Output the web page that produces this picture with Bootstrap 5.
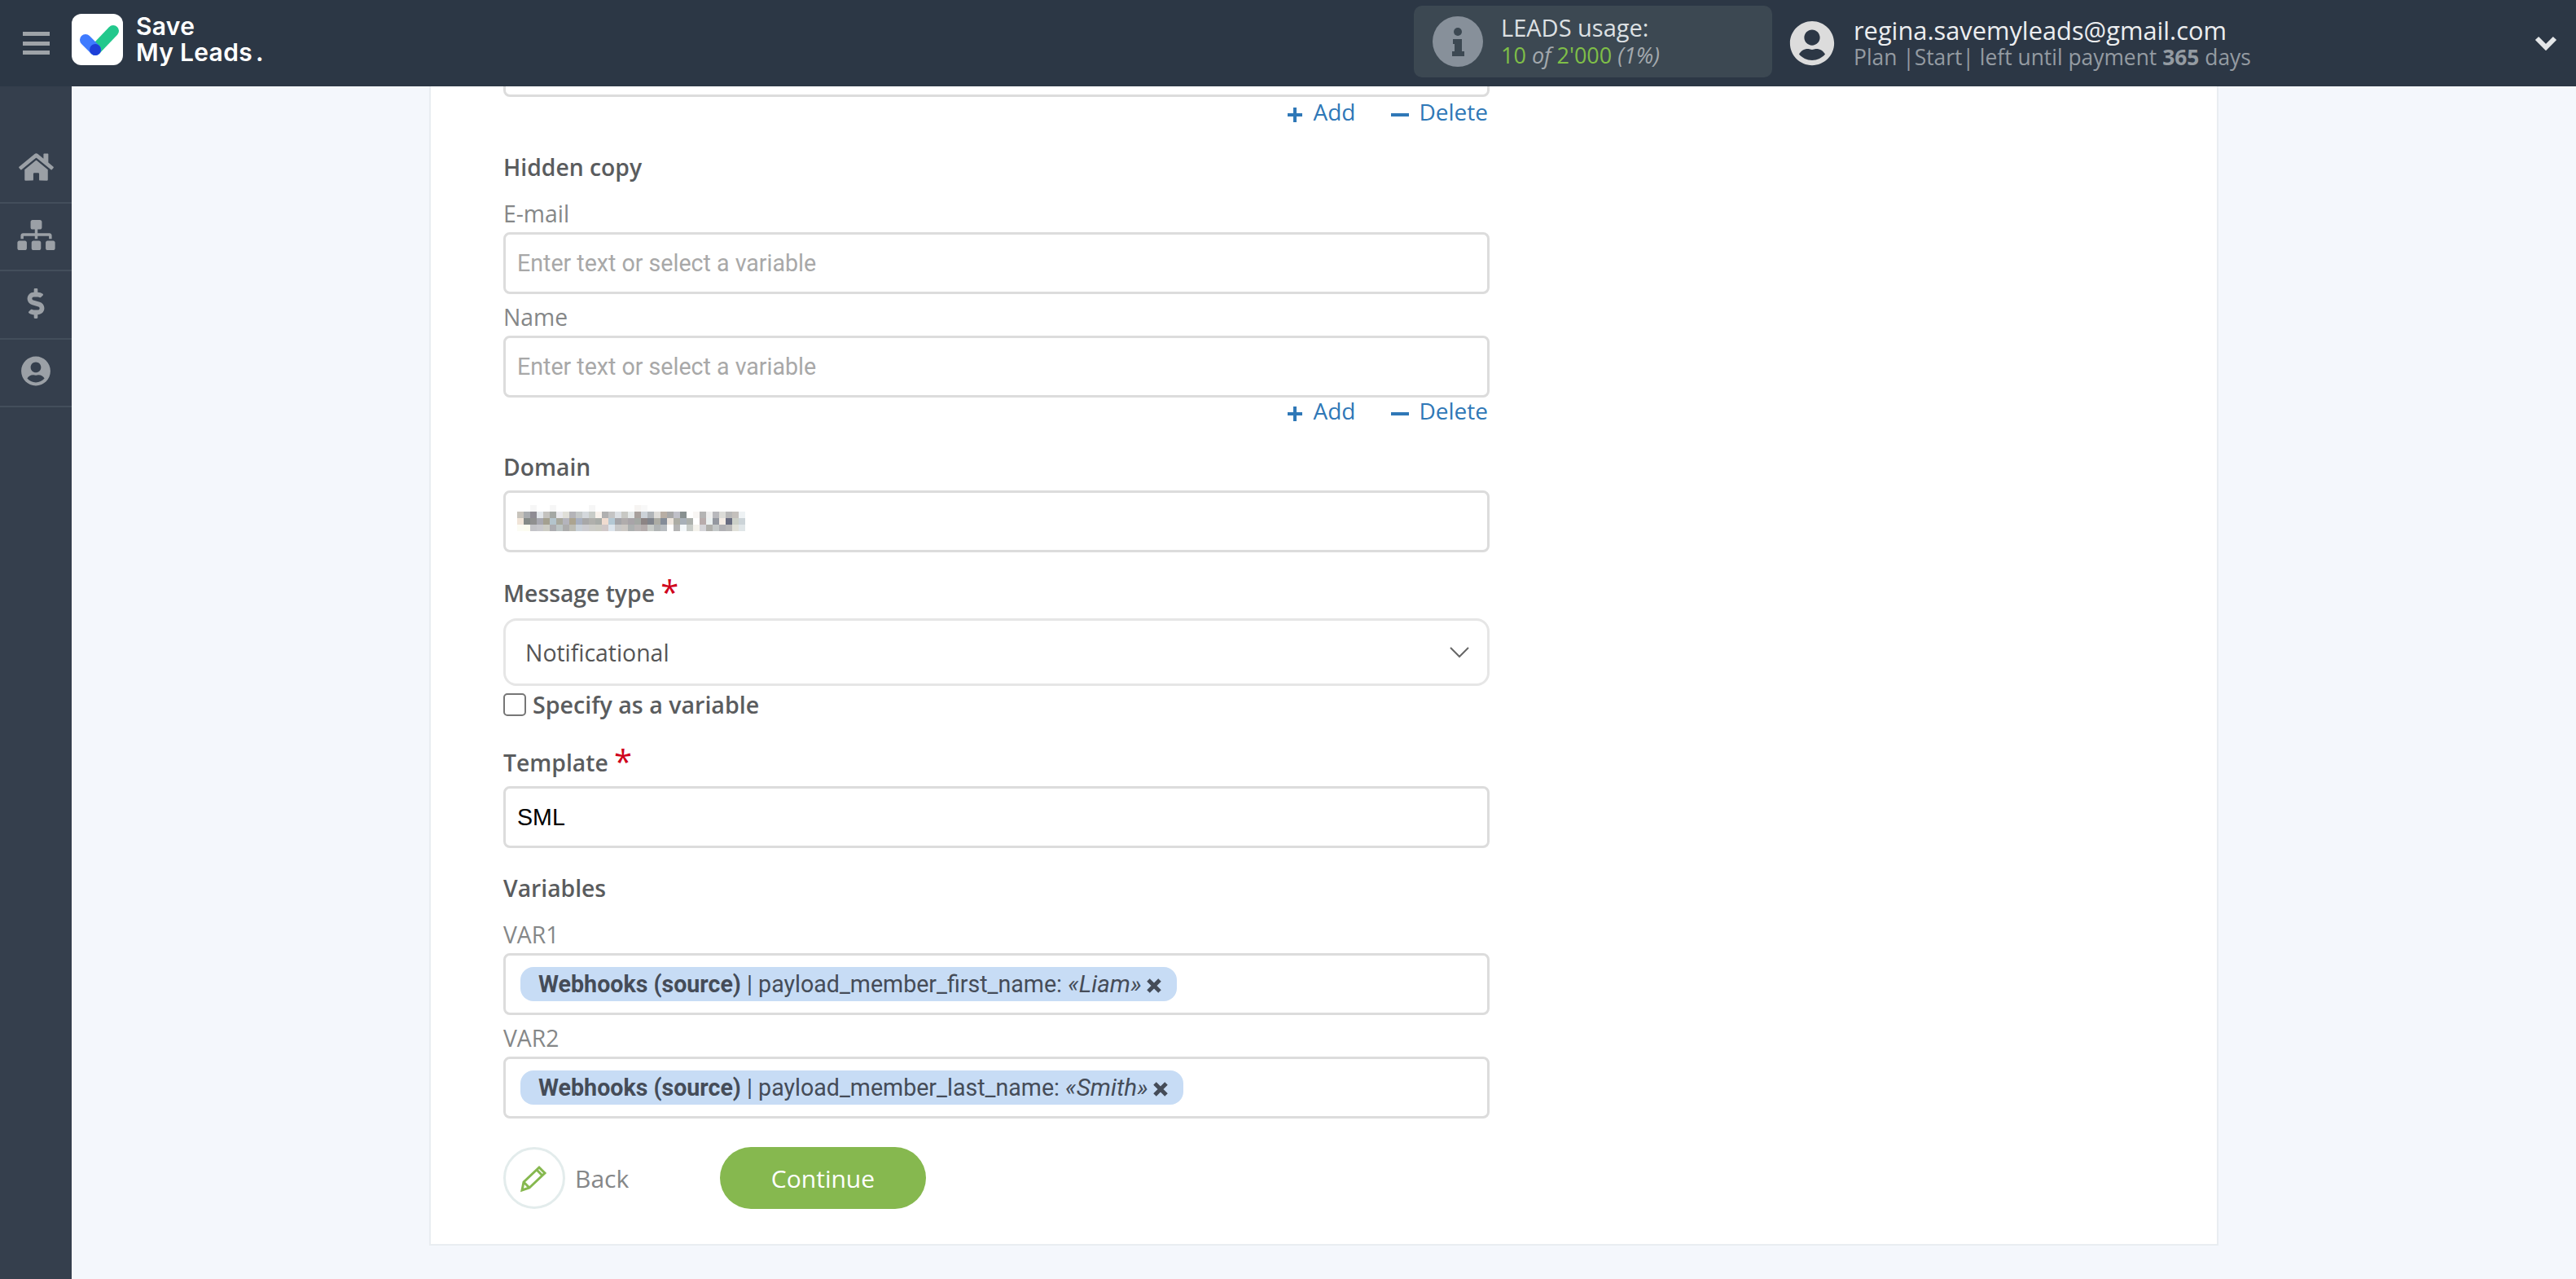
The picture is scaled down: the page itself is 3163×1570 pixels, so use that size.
<!DOCTYPE html>
<html lang="en">
<head>
  <meta charset="UTF-8">
  <title>Save My Leads</title>
  <link href="https://cdn.jsdelivr.net/npm/bootstrap@5.3.3/dist/css/bootstrap.min.css" rel="stylesheet">
  <style>
    body { background: #f4f7fc; font-family: "Open Sans", sans-serif; color: #57595c; }
    .topbar { height: 106px; background: #2c3745; flex: none; }
    .burger { width: 88px; }
    .burger span { display: block; width: 33px; height: 5px; margin: 3.25px auto; background: #9ea3a8; }
    .logo-box { width: 63px; height: 63px; border-radius: 12px; background: #fff; }
    .logo-text { margin-left: 16px; font: 600 30px/32px Inter, sans-serif; color: #fff; letter-spacing: .3px; }
    .usage { width: 440px; height: 88px; margin-top: 7px; margin-left: auto; padding-left: 23px; background: #3c4852; border-radius: 10px; }
    .usage-text { margin-left: 22px; font-size: 29px; line-height: 34px; color: #dde0e3; }
    .usage-text .sub { font-size: 27px; color: #a3a9ae; font-style: italic; }
    .usage-text .num { color: #7fbf48; font-style: normal; }
    .account { width: 966px; margin-left: 21px; padding-right: 23px; flex: none; }
    .account-text { margin-left: 23px; font-size: 30.8px; line-height: 34px; color: #eceef0; }
    .account-text .sub { font-size: 26.4px; line-height: 32px; color: #949ba2; }
    .sidebar { width: 88px; flex: none; background: #353f4d; padding-top: 60px; }
    .side-item { height: 83.5px; padding-bottom: 3px; border-bottom: 2px solid #434e5b; }
    .main-area { min-width: 0; overflow: hidden; padding-bottom: 41px; }
    .sheet { width: 2197px; flex: none; margin: 0 auto; padding: 0 0 43px 89px; background: #fff; border: solid #e9edf1; border-width: 0 2px 2px; }
    .form-box { width: 1211px; }
    .form-box .form-control { height: 76px; padding: 0 14px; border: 3px solid #dcdcdc; border-radius: 8px; font: 28.6px "Roboto", sans-serif; box-shadow: none; }
    .form-box .form-control::placeholder { color: #a8a8a8; opacity: 1; }
    .form-box .typed { font-family: "Liberation Sans", sans-serif; color: #000; }
    .form-box .form-select { height: 83px; padding: 0 24px; border: 3px solid #e6e6e6; border-radius: 16px; font: 28.4px "Open Sans", sans-serif; color: #555; background-image: none; }
    .select-wrap svg { right: 24px; top: 34px; }
    .lbl-strong { font-size: 28.3px; line-height: 38px; font-weight: 600; color: #5a5c5e; margin: 0; }
    .lbl-light { font-size: 28.3px; line-height: 38px; color: #858788; margin: 9px 0 0; }
    .lbl-first { margin-top: 19px; }
    .req { color: #d0021b; font-size: 40px; line-height: 20px; font-weight: 400; vertical-align: -3px; }
    .add-row { height: 36px; gap: 44px; padding-right: 2px; font-size: 28px; line-height: 36px; color: #2f78b7; }
    .add-row svg { margin-right: 12px; }
    .add-next { margin-top: -2px; }
    .blur-box { left: 17px; top: 18px; }
    .check-row { height: 34px; margin-top: 6px; font-size: 28.6px; line-height: 34px; font-weight: 600; color: #5a5c5e; }
    .form-box .form-check-input { width: 28px; height: 28px; margin: 0 8px 0 0; border: 2px solid #767676; border-radius: 5px; box-shadow: none; }
    .chip-field { display: flex; align-items: center; padding: 0 18px !important; }
    .chip { height: 42px; padding: 0 18px 0 22px; border-radius: 16px; background: #c7dcf5; font: 28.6px/42px "Roboto", sans-serif; color: #454c58; white-space: nowrap; }
    .chip i { font-size: 29.6px; }
    .chip svg { margin-left: 5px; vertical-align: -2px; }
    .round-back { width: 76px; height: 76px; border: 3px solid #e3ecec; border-radius: 50%; background: #fff; padding: 0; }
    .back-text { margin-left: 12px; width: 178px; font-size: 30px; color: #858788; }
    .next-btn { width: 253px; height: 76px; border: 0; border-radius: 38px; background: #86b84f; color: #fff; font-size: 30px; padding: 0; }
    .next-btn:hover { background: #86b84f; color: #fff; }
    .mt-a { margin-top: 31px; }
    .mt-in { margin-top: 4px; }
    .mt-d { margin-top: 32px; }
    .mt-v { margin-top: 30px; }
    .mt-domain { margin-top: 10px; }
    .mt-tpl { margin-top: 10px; }
    .mt-sel { margin-top: 12px; }
    .mt-f { margin-top: 31px; }
    .mt-t { margin-top: 35px; }
    .mt-g { margin-top: 35px; }
  </style>
</head>
<body class="d-flex flex-column vh-100 overflow-hidden">

<!-- Top bar -->
<header class="topbar d-flex">
  <div class="burger d-flex flex-column justify-content-center"><span></span><span></span><span></span></div>
  <div class="d-flex align-items-center align-self-start pt-3">
    <div class="logo-box">
      <svg width="63" height="63" viewBox="0 0 63 63">
        <path d="M29 44L51 21" stroke="#22c88c" stroke-width="14" stroke-linecap="round"/>
        <path d="M17 32L29 44" stroke="#3f7bff" stroke-width="14" stroke-linecap="round"/>
        <circle cx="29" cy="44" r="7" fill="#1e3fd8"/>
      </svg>
    </div>
    <div class="logo-text">Save<br>My Leads<span class="ms-1">.</span></div>
  </div>
  <div class="usage d-flex align-items-center">
    <svg width="62" height="62" viewBox="0 0 62 62">
      <circle cx="31" cy="31" r="31" fill="#87909a"/>
      <circle cx="31" cy="19" r="5" fill="#3c4852"/>
      <path d="M25 28h11v15h3v6H24v-6h3v-9h-2z" fill="#3c4852"/>
    </svg>
    <div class="usage-text">
      <div>LEADS usage:</div>
      <div class="sub"><span class="num">10</span> of <span class="num">2'000</span> (1%)</div>
    </div>
  </div>
  <div class="account d-flex align-items-center">
    <svg width="56" height="56" viewBox="0 0 496 512"><path fill="#dcdcdc" d="M248 8C111 8 0 119 0 256s111 248 248 248 248-111 248-248S385 8 248 8zm0 96c48.6 0 88 39.4 88 88s-39.4 88-88 88-88-39.4-88-88 39.4-88 88-88zm0 344c-58.7 0-111.3-26.6-146.5-68.2 18.8-35.4 55.6-59.8 98.5-59.8 2.4 0 4.8.4 7.1 1.1 13 4.2 26.6 6.9 40.9 6.9 14.3 0 28-2.7 40.9-6.9 2.3-.7 4.7-1.1 7.1-1.1 42.9 0 79.7 24.4 98.5 59.8C359.3 421.4 306.7 448 248 448z"/></svg>
    <div class="account-text">
      <div>regina.savemyleads@gmail.com</div>
      <div class="sub">Plan |Start| left until payment <b>365</b> days</div>
    </div>
    <svg class="ms-auto" width="28" height="18" viewBox="0 0 28 18"><path d="M3 3l11 11L25 3" fill="none" stroke="#e4e6e8" stroke-width="6"/></svg>
  </div>
</header>

<div class="d-flex flex-grow-1" style="min-height:0">
  <!-- Side menu -->
  <nav class="sidebar">
    <div class="side-item d-flex align-items-center justify-content-center">
      <svg width="43" height="38" viewBox="0 0 576 512"><path fill="#9ba0a6" d="M280.37 148.26L96 300.11V464a16 16 0 0 0 16 16l112.06-.29a16 16 0 0 0 15.92-16V368a16 16 0 0 1 16-16h64a16 16 0 0 1 16 16v95.64a16 16 0 0 0 16 16.05L464 480a16 16 0 0 0 16-16V300L295.67 148.26a12.19 12.19 0 0 0-15.3 0zM571.6 251.47L488 182.56V44.05a12 12 0 0 0-12-12h-56a12 12 0 0 0-12 12v72.61L318.47 43a48 48 0 0 0-61 0L4.34 251.47a12 12 0 0 0-1.6 16.9l25.5 31A12 12 0 0 0 45.15 301l235.22-193.74a12.19 12.19 0 0 1 15.3 0L530.9 301a12 12 0 0 0 16.9-1.6l25.5-31a12 12 0 0 0-1.7-16.93z"/></svg>
    </div>
    <div class="side-item d-flex align-items-center justify-content-center">
      <svg width="47" height="37" viewBox="0 0 640 512"><path fill="#9ba0a6" d="M128 352H32c-17.67 0-32 14.33-32 32v96c0 17.67 14.33 32 32 32h96c17.67 0 32-14.33 32-32v-96c0-17.67-14.33-32-32-32zm-24-80h192v48h48v-48h192v48h48v-57.59c0-21.17-17.23-38.41-38.41-38.41H344v-64h40c17.67 0 32-14.33 32-32V32c0-17.67-14.33-32-32-32H256c-17.67 0-32 14.33-32 32v96c0 17.67 14.33 32 32 32h40v64H94.41C73.23 224 56 241.23 56 262.41V320h48v-48zm264 80h-96c-17.67 0-32 14.33-32 32v96c0 17.67 14.33 32 32 32h96c17.67 0 32-14.33 32-32v-96c0-17.67-14.33-32-32-32zm240 0h-96c-17.67 0-32 14.33-32 32v96c0 17.67 14.33 32 32 32h96c17.67 0 32-14.33 32-32v-96c0-17.67-14.33-32-32-32z"/></svg>
    </div>
    <div class="side-item d-flex align-items-center justify-content-center">
      <svg width="22" height="37" viewBox="0 0 288 512"><path fill="#9ba0a6" d="M209.2 233.4l-108-31.6C88.7 198.2 80 186.5 80 173.5c0-16.3 13.2-29.5 29.5-29.5h66.3c12.2 0 24.2 3.7 34.2 10.5 6.1 4.1 14.3 3.1 19.5-2l34.8-34c7.1-6.9 6.1-18.4-1.8-24.5C238 74.8 207.4 64.1 176 64V16c0-8.8-7.2-16-16-16h-32c-8.8 0-16 7.2-16 16v48h-2.5C45.8 64-5.4 118.7.5 183.6c4.2 46.1 39.4 83.6 83.8 96.6l102.5 30c12.5 3.7 21.2 15.3 21.2 28.3 0 16.3-13.2 29.5-29.5 29.5h-66.3C100 368 88 364.3 78 357.5c-6.1-4.1-14.3-3.1-19.5 2l-34.8 34c-7.1 6.9-6.1 18.4 1.8 24.5 24.5 19.2 55.1 29.9 86.5 30v48c0 8.8 7.2 16 16 16h32c8.8 0 16-7.2 16-16v-48.2c46.6-.9 90.3-28.6 105.7-72.7 21.5-61.6-14.6-124.8-72.5-141.7z"/></svg>
    </div>
    <div class="side-item d-flex align-items-center justify-content-center">
      <svg width="36" height="37" viewBox="0 0 496 512"><path fill="#9ba0a6" d="M248 8C111 8 0 119 0 256s111 248 248 248 248-111 248-248S385 8 248 8zm0 96c48.6 0 88 39.4 88 88s-39.4 88-88 88-88-39.4-88-88 39.4-88 88-88zm0 344c-58.7 0-111.3-26.6-146.5-68.2 18.8-35.4 55.6-59.8 98.5-59.8 2.4 0 4.8.4 7.1 1.1 13 4.2 26.6 6.9 40.9 6.9 14.3 0 28-2.7 40.9-6.9 2.3-.7 4.7-1.1 7.1-1.1 42.9 0 79.7 24.4 98.5 59.8C359.3 421.4 306.7 448 248 448z"/></svg>
    </div>
  </nav>

  <!-- Form, scrolled to its bottom so the top is cut off -->
  <main class="main-area flex-grow-1 d-flex flex-column justify-content-end">
    <div class="sheet">
      <form class="form-box">
        <input class="form-control" type="text">
        <div class="add-row d-flex justify-content-end">
          <span><svg width="20" height="20" viewBox="0 0 20 20"><path d="M10 1v18M1 10h18" stroke="#2f78b7" stroke-width="4"/></svg>Add</span>
          <span><svg width="22" height="20" viewBox="0 0 22 20"><path d="M0 10h22" stroke="#2f78b7" stroke-width="4"/></svg>Delete</span>
        </div>

        <p class="lbl-strong mt-a">Hidden copy</p>
        <p class="lbl-light lbl-first">E-mail</p>
        <input class="form-control mt-in" type="text" placeholder="Enter text or select a variable">
        <p class="lbl-light">Name</p>
        <input class="form-control mt-in" type="text" placeholder="Enter text or select a variable">
        <div class="add-row add-next d-flex justify-content-end">
          <span><svg width="20" height="20" viewBox="0 0 20 20"><path d="M10 1v18M1 10h18" stroke="#2f78b7" stroke-width="4"/></svg>Add</span>
          <span><svg width="22" height="20" viewBox="0 0 22 20"><path d="M0 10h22" stroke="#2f78b7" stroke-width="4"/></svg>Delete</span>
        </div>

        <p class="lbl-strong mt-d">Domain</p>
        <div class="position-relative mt-domain">
          <input class="form-control" type="text">
          <svg id="blurred" class="blur-box position-absolute" width="280" height="32" viewBox="0 0 35 4" shape-rendering="crispEdges"></svg>
        </div>

        <p class="lbl-strong mt-f">Message type <span class="req">*</span></p>
        <div class="select-wrap position-relative mt-sel">
          <select class="form-select"><option>Notificational</option></select>
          <svg class="position-absolute" width="26" height="15" viewBox="0 0 26 15"><path d="M2 2l11 11L24 2" fill="none" stroke="#666" stroke-width="2"/></svg>
        </div>
        <div class="check-row d-flex align-items-center">
          <input class="form-check-input" type="checkbox"><span>Specify as a variable</span>
        </div>

        <p class="lbl-strong mt-t">Template <span class="req">*</span></p>
        <input class="form-control typed mt-tpl" type="text" value="SML">

        <p class="lbl-strong mt-v">Variables</p>
        <p class="lbl-light lbl-first">VAR1</p>
        <div class="form-control chip-field mt-in">
          <span class="chip"><b>Webhooks (source)</b> | payload_member_first_name: <i>«Liam»</i><svg width="20" height="20" viewBox="0 0 20 20"><path d="M3 3l14 14M17 3L3 17" stroke="#454c58" stroke-width="5"/></svg></span>
        </div>
        <p class="lbl-light">VAR2</p>
        <div class="form-control chip-field mt-in">
          <span class="chip"><b>Webhooks (source)</b> | payload_member_last_name: <i>«Smith»</i><svg width="20" height="20" viewBox="0 0 20 20"><path d="M3 3l14 14M17 3L3 17" stroke="#454c58" stroke-width="5"/></svg></span>
        </div>

        <div class="d-flex align-items-center mt-g">
          <button type="button" class="round-back d-flex align-items-center justify-content-center">
            <svg width="36" height="36" viewBox="0 0 36 36"><path d="M3 33l2-10L24 5l7 7-19 18zM5 23l7 7M21 8l7 7" fill="none" stroke="#86b84f" stroke-width="3"/></svg>
          </button>
          <span class="back-text">Back</span>
          <button type="button" class="btn next-btn">Continue</button>
        </div>
      </form>
    </div>
  </main>
</div>

<script>
// pixelated e-mail domain, 35 x 4 cells
const rows = [
  'ffffff,ffffff,f6f6f6,ffffff,ffffff,f6f6f6,ffffff,ffffff,ffffff,ffffff,ffffff,f6f6f6,ffffff,ffffff,ffffff,ffffff,ffffff,ffffff,f6f4f2,f8f8f8,ffffff,ffffff,ffffff,ffffff,ffffff,ffffff,ffffff,ffffff,ffffff,ffffff,ffffff,ffffff,ffffff,ffffff,ffffff',
  'c8c4bc,a8abae,8f8c94,e2e6ea,c4c2be,a4a8a4,e8e8ec,e0dfd8,b4b4b8,c4c8c8,d4d8dc,c8ccc8,f8f2ec,b0b0b0,c4c4c4,dce0e4,c8c8c4,e4e8e8,a8a09c,ccd2d8,b0b4b8,dedcd8,b8aea4,a8a8a8,c0c0c8,889090,ffffff,f8f6f4,b4b4b4,eeeeee,b8b8bc,dcdcd8,b8b8b8,c4c0bc,eef2f4',
  'f0e4d8,858a88,909090,a8a8b0,a4a090,b4c4cc,a8a89c,b4b4bc,aca490,a8b0c0,a8a8a8,b0b0ac,a8aca8,f0dcd0,b4c8d4,a4a4a8,b0acac,a8a4a8,a4a8a4,8c8484,80848c,acaca4,848c98,ece4dc,acaca4,a8b0b8,acb0ac,ffffff,b8acac,eaf0f0,9498a0,f4ece4,686c80,ccd0c8,ccd4d8',
  'fcfcf4,fcfcf0,c4c4c8,c8c8cc,ccccc4,acacb0,bcc4c4,acacac,bcbcb4,c8d0d8,ccccd0,ccccc8,ccccc4,d0c8c8,dce4ec,c8c8c8,ccc8c4,acb0b0,b8b4b4,b4acac,c8ccc8,b0b4b4,b8bcc0,ffffff,b4b4b4,f4f8fa,c8ccc8,f4f2ec,d4d4d8,b0b0ac,c4c8c8,b0b0b4,b8b8b8,e0e0d8,e0e6e8'
];
const svg = document.getElementById('blurred');
let out = '';
rows.forEach((row, y) => {
  row.split(',').forEach((c, x) => {
    out += `<rect x="${x}" y="${y}" width="1" height="1" fill="#${c}"/>`;
  });
});
svg.innerHTML = out;
</script>
<script src="https://cdn.jsdelivr.net/npm/bootstrap@5.3.3/dist/js/bootstrap.bundle.min.js"></script>
</body>
</html>
